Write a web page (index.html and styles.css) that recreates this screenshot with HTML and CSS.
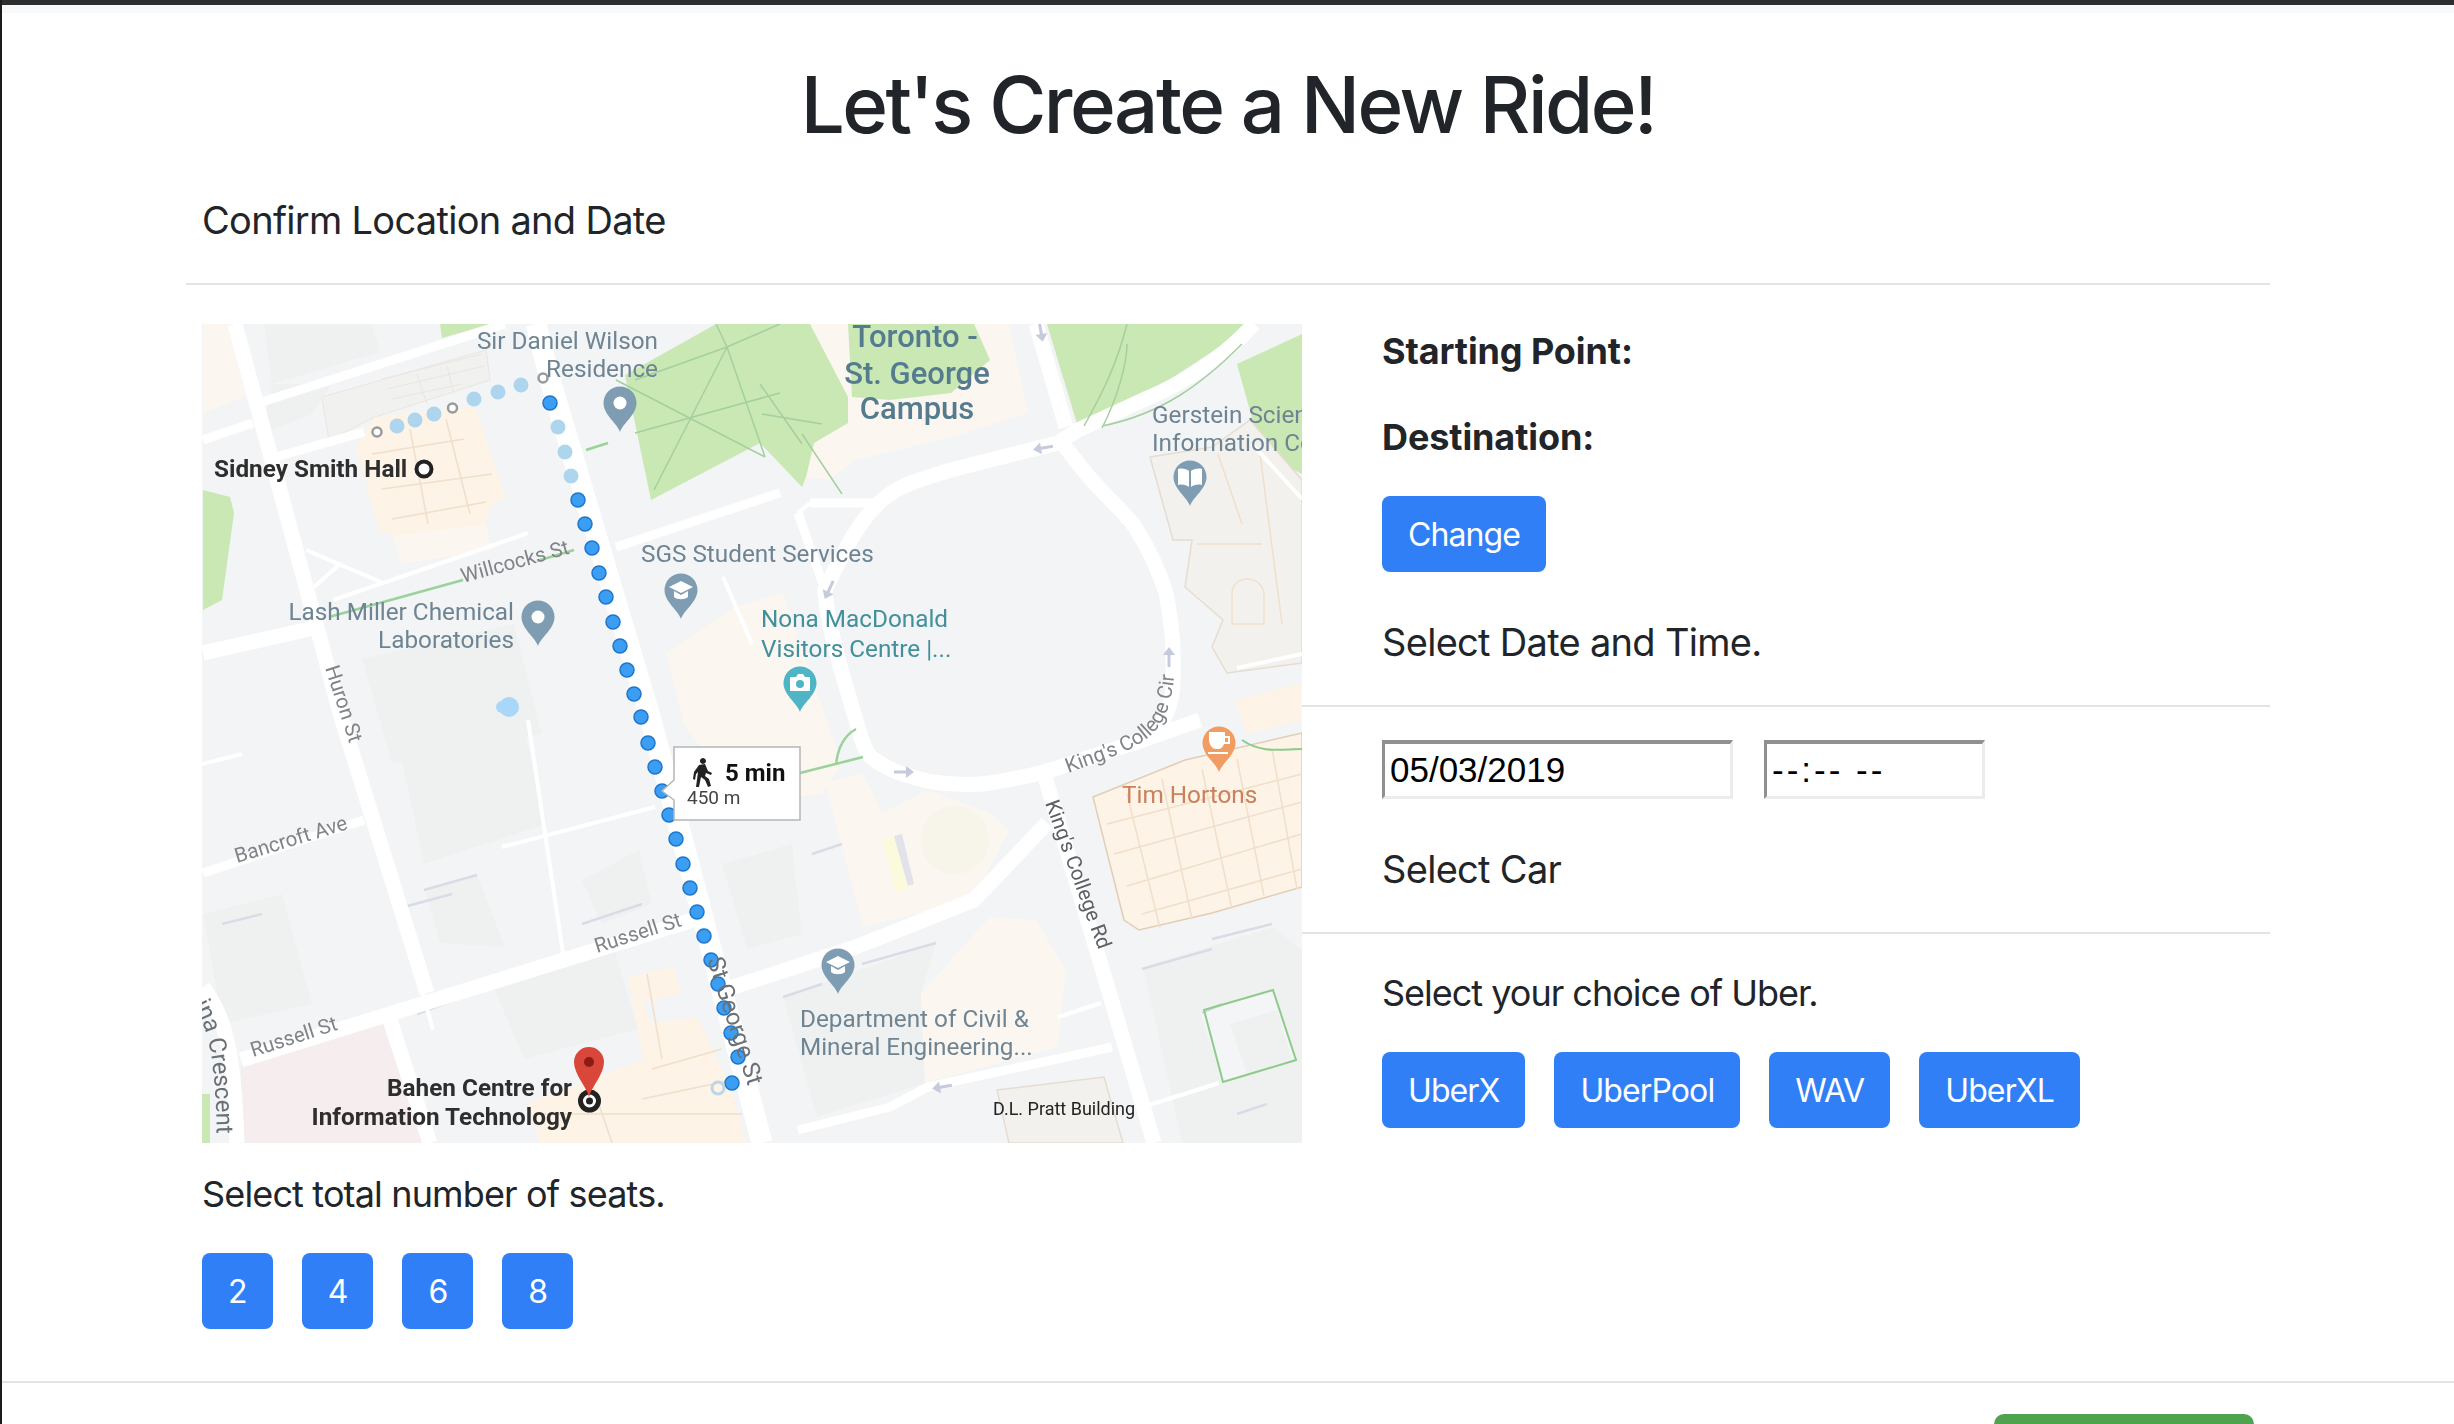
FILE: index.html
```html
<!DOCTYPE html>
<html lang="en">
<head>
    <meta charset="UTF-8">
    <meta name="viewport" content="width=device-width, initial-scale=1.0">
    <title>New Ride</title>
    <link rel="stylesheet" href="styles.css">
</head>
<body>
    <div class="top-bar"></div>
    <div class="top-band"></div>

    <main class="page">
        <h1 class="title">Let's Create a New Ride!</h1>

        <div class="wrap">
            <h2 class="subtitle">Confirm Location and Date</h2>
            <hr class="rule">

            <div class="columns">
                <!-- left side, map and seats -->
                <section class="col-left">
                    <svg class="map" viewBox="0 0 1100 819" width="1100" height="819" role="img" aria-label="Walking route map">
                        <defs>
                            <path id="pin" d="M0 29C-3 20-16.5 12-16.5 0A16.5 16.5 0 1 1 16.5 0C16.5 12 3 20 0 29Z"/>
                            <path id="arrow" d="M-10-1.5H2V-6L10 0 2 6V1.5H-10Z"/>
                            <path id="cap" d="M0-9-12-3 0 3 12-3ZM-7 1V7C-4 10 4 10 7 7V1L0 5Z"/>
                            <path id="kings-cir" d="M866 449C900 436 930 428 948 412C966 396 972 372 973 335"/>
                            <path id="crescent" d="M-8 680C2 700 8 716 11 745C14 770 15 800 15 840"/>
                        </defs>

                        <!-- green -->
                        <polygon class="green" points="423,51 514,0 803,0 788,36 646,119 604,153 600,163 558,119 449,176"/>
                        <polygon class="green" points="845,0 1052,0 941,73 876,103"/>
                        <polygon class="green" points="238,0 288,0 240,14"/>
                        <polygon class="green" points="1,166 28,173 32,189 20,276 1,286"/>
                        <polygon class="green" points="1035,40 1100,10 1100,150 1060,130"/>
                        <polygon class="green" points="0,770 8,770 8,819 0,819"/>
                        <polygon class="pink" points="39,739 181,699 223,819 39,819"/>

                        <!-- buildings -->
                        <polygon class="cream-pale" points="1,0 26,0 47,70 1,90"/>
                        <polygon class="grey" points="62,0 170,0 178,28 70,60"/>
                        <polygon class="outline-soft" points="120,73 284,26 288,56 173,93 127,116"/>
                        <path class="inner-soft" d="M180 55 280 30M185 65 282 42M190 75 260 60M215 50 225 80M245 42 252 70"/>
                        <polygon class="cream" points="173,93 273,83 303,173 288,183 284,203 196,213 177,206 154,123"/>
                        <path class="inner" d="M170 130 262 115M180 165 290 150M190 195 284 178M208 105 226 200M244 95 268 190"/>
                        <polygon class="cream-pale" points="190,212 284,200 290,226 200,240"/>
                        <polygon class="cream-pale" points="608,0 646,73 646,99 612,119 604,153 627,156 654,136 749,113 826,89 807,0"/>
                        <polygon class="green" points="646,0 772,0 788,36 749,69 688,76 650,73"/>
                        <polygon class="outline" points="948,133 1010,123 1048,96 1100,156 1100,339 1025,349 1010,323 1021,296 983,263 990,216 971,216"/>
                        <path class="inner" d="M1016 130 1040 200M1058 130 1080 300M995 220H1060M1030 270C1030 250 1060 250 1062 270V300H1030Z"/>
                        <polygon class="cream-pale" points="464,329 533,283 581,269 640,440 620,470 540,480 482,400"/>
                        <polygon class="cream-pale" points="623,459 661,449 680,489 726,466 788,489 807,506 772,576 661,603"/>
                        <circle class="rotunda" cx="753" cy="516" r="34"/>
                        <polygon class="yellow" points="680,515 692,512 707,565 694,568"/>
                        <polygon class="violet" points="692,512 700,510 712,560 706,562"/>
                        <polygon class="cream-edge" points="891,473 983,436 1100,409 1100,563 1010,589 937,606 922,596"/>
                        <path class="inner" d="M905 500 1100 450M912 530 1100 478M925 562 1100 510M940 590 1100 545M925 470 958 604M960 455 990 595M1000 445 1030 585M1035 435 1062 572M1070 425 1095 565"/>
                        <polygon class="cream" points="1032,376 1100,359 1100,396 1045,410"/>
                        <polygon class="grey" points="581,673 734,619 719,669 723,759 615,793"/>
                        <polygon class="cream-pale" points="719,669 788,593 834,596 864,646 856,723 723,759"/>
                        <polygon class="outline" points="795,766 902,753 921,819 807,819"/>
                        <polygon class="grey" points="941,643 1071,603 1100,626 1100,819 980,819"/>
                        <polygon class="grey-light" points="998,688 1071,666 1094,736 1021,758"/>
                        <polygon class="grey" points="1028,700 1075,686 1090,735 1045,750"/>
                        <polygon class="grey" points="196,419 320,396 345,500 222,540"/>
                        <polygon class="grey" points="223,566 275,551 303,623 238,619"/>
                        <polygon class="grey" points="1,590 80,570 110,680 20,700"/>
                        <polygon class="grey" points="380,556 437,526 450,580 400,600"/>
                        <polygon class="grey" points="130,60 110,90 60,110 70,60"/>
                        <polygon class="grey" points="160,335 312,300 340,410 190,440"/>
                        <polygon class="grey" points="290,660 411,621 436,705 322,735"/>
                        <polygon class="grey" points="520,540 590,520 600,610 545,625"/>
                        <polygon class="cream" points="426,653 472,643 479,669 441,679 449,699 495,693 529,763 544,819 338,819 326,779 441,736"/>
                        <path class="inner" d="M445 650 460 735M390 760 410 819M450 745 520 725M440 775 535 755M340 790H540"/>
                        <path class="edge" d="M222 566 275 551M198 584 250 570M380 600 440 580M20 600 60 590M610 530 640 520M940 645 1010 625M1010 615 1070 600M581 673 620 660M660 640 734 619M215 690 275 668M1000 689 1020 680M1035 790 1065 780"/>

                        <!-- roads -->
                        <path class="road-xl" d="M334 0 349 59 449 396 560 819"/>
                        <path class="road-lg" d="M33 0 140 396 225 669M188 696 228 819M1 329 112 304M39 736 491 596M510 670 654 623 772 576 845 499M834 0 864 103M843 453 952 819M1 663C20 690 32 716 35 819"/>
                        <path class="road-lg" d="M1052 0C1020 35 980 60 941 76L876 106 856 119 749 146C720 155 700 160 684 173C660 190 640 230 623 266C625 300 640 350 654 396C660 420 665 432 673 436C690 448 705 452 730 458C750 460 770 462 788 459C810 455 830 452 849 446L941 416 998 396"/>
                        <path class="road-lg" d="M860 119 879 143C900 170 920 185 933 203C950 230 958 250 964 269C970 300 972 320 971 343C972 370 968 385 960 398L942 416"/>
                        <path class="road-md" d="M1 116 51 99M60 78 303 0M1 549 162 496M74 133 162 108M414 223 578 169M596 189 623 266M608 179H673M688 783 726 763 910 723M596 806 688 783"/>
                        <path class="road-sm" d="M104 226 181 259M112 263 139 239M131 276 257 233 326 209M300 523 453 483M941 783 1017 759M856 693 899 679M521 253 550 320M596 189 608 179M1050 120 1100 175M326 396 361 629M177 511 231 706M1035 344 1100 330M0 440 40 430"/>

                        <!-- lines on the park -->
                        <path class="park-line" d="M525 23 452 166M525 23 563 133M433 109 578 69M414 56 563 133M433 56 525 23 578 0M525 23 514 0M558 60 600 120M560 90 620 100M640 170 600 110"/>
                        <path class="park-line" d="M882 102C900 70 915 40 925 0M900 104C915 75 925 40 925 20M900 102C960 90 1000 60 1040 20"/>
                        <path class="trail" d="M384 126 406 119M127 293 261 256M335 237 372 226M598 449 661 433M634 441C636 420 645 410 654 405"/>
                        <path class="trail-thin" d="M1002 686 1071 666 1094 736 1021 758ZM1040 416C1060 430 1080 425 1100 425"/>
                        <circle class="water" cx="307" cy="383" r="10"/>
                        <circle class="water" cx="300" cy="383" r="6"/>

                        <use class="arrow" href="#arrow" transform="translate(841,124) rotate(170)"/>
                        <use class="arrow" href="#arrow" transform="translate(627,266) rotate(115)"/>
                        <use class="arrow" href="#arrow" transform="translate(967,333) rotate(-90)"/>
                        <use class="arrow" href="#arrow" transform="translate(839,8) rotate(80)"/>
                        <use class="arrow" href="#arrow" transform="translate(702,448)"/>
                        <use class="arrow" href="#arrow" transform="translate(740,763) rotate(170)"/>

                        <!-- route dots -->
                        <g class="dot-ring">
                            <circle cx="175" cy="108" r="4.5"/>
                            <circle cx="250.5" cy="84" r="4.5"/>
                            <circle cx="341" cy="54" r="4.5"/>
                        </g>
                        <g class="dot-pale">
                            <circle cx="195" cy="102" r="7.5"/>
                            <circle cx="213" cy="96" r="7.5"/>
                            <circle cx="232" cy="90" r="7.5"/>
                            <circle cx="272" cy="75" r="7.5"/>
                            <circle cx="296" cy="68" r="7.5"/>
                            <circle cx="319" cy="61" r="7.5"/>
                            <circle cx="356" cy="103" r="7.5"/>
                            <circle cx="363" cy="128" r="7.5"/>
                            <circle cx="369" cy="152" r="7.5"/>
                        </g>
                        <g class="dot">
                            <circle cx="348" cy="79" r="7"/>
                            <circle cx="376" cy="176" r="7"/>
                            <circle cx="383" cy="200" r="7"/>
                            <circle cx="390" cy="224" r="7"/>
                            <circle cx="397" cy="249" r="7"/>
                            <circle cx="404" cy="273" r="7"/>
                            <circle cx="411" cy="298" r="7"/>
                            <circle cx="418" cy="322" r="7"/>
                            <circle cx="425" cy="346" r="7"/>
                            <circle cx="432" cy="370" r="7"/>
                            <circle cx="439" cy="393" r="7"/>
                            <circle cx="446" cy="419" r="7"/>
                            <circle cx="453" cy="443" r="7"/>
                            <circle cx="460" cy="467" r="7"/>
                            <circle cx="467" cy="491" r="7"/>
                            <circle cx="474" cy="515" r="7"/>
                            <circle cx="481" cy="540" r="7"/>
                            <circle cx="488" cy="564" r="7"/>
                            <circle cx="495" cy="588" r="7"/>
                            <circle cx="502" cy="612" r="7"/>
                            <circle cx="509" cy="636" r="7"/>
                            <circle cx="516" cy="660" r="7"/>
                            <circle cx="522" cy="684" r="7"/>
                            <circle cx="529" cy="709" r="7"/>
                            <circle cx="536" cy="733" r="7"/>
                            <circle cx="530" cy="759" r="7"/>
                        </g>
                        <circle class="end-ring" cx="516" cy="764" r="6"/>

                        <!-- pins -->
                        <use class="pin-blue" href="#pin" transform="translate(418,79)"/>
                        <circle class="pin-hole" cx="418" cy="79" r="6.5"/>
                        <use class="pin-blue" href="#pin" transform="translate(336,293)"/>
                        <circle class="pin-hole" cx="336" cy="293" r="6.5"/>
                        <use class="pin-blue" href="#pin" transform="translate(479,266)"/>
                        <use class="pin-hole" href="#cap" transform="translate(479,266)"/>
                        <use class="pin-blue" href="#pin" transform="translate(636,641)"/>
                        <use class="pin-hole" href="#cap" transform="translate(636,641)"/>
                        <use class="pin-blue" href="#pin" transform="translate(988,153)"/>
                        <path class="pin-hole" d="M976 145C980 144 985 145 987 147V163C985 161 980 160 976 161ZM1000 145C996 144 991 145 989 147V163C991 161 996 160 1000 161Z"/>
                        <use class="pin-teal" href="#pin" transform="translate(598,359)"/>
                        <path class="pin-hole" d="M588 353H594L596 350H601L603 353H608V367H588Z"/>
                        <circle class="pin-teal" cx="598" cy="360" r="4"/>
                        <use class="pin-orange" href="#pin" transform="translate(1017,419)"/>
                        <path class="pin-hole" d="M1007 408H1023V412H1028V420H1022C1021 423 1019 425 1016 425H1014C1010 425 1007 420 1007 416ZM1023 414V418H1026V414ZM1006 428H1026V430H1006Z"/>

                        <!-- map labels -->
                        <text class="lbl lbl-end" x="456" y="25">Sir Daniel Wilson</text>
                        <text class="lbl lbl-end" x="456" y="53">Residence</text>
                        <text class="lbl" x="439" y="238">SGS Student Services</text>
                        <text class="lbl lbl-end" x="312" y="296">Lash Miller Chemical</text>
                        <text class="lbl lbl-end" x="312" y="324">Laboratories</text>
                        <text class="lbl" x="950" y="99">Gerstein Science</text>
                        <text class="lbl" x="950" y="127">Information Commons</text>
                        <text class="lbl" x="598" y="703">Department of Civil &amp;</text>
                        <text class="lbl" x="598" y="731">Mineral Engineering...</text>
                        <text class="lbl-campus" x="713" y="23">Toronto -</text>
                        <text class="lbl-campus" x="715" y="60">St. George</text>
                        <text class="lbl-campus" x="715" y="95">Campus</text>
                        <text class="lbl-teal" x="559" y="303">Nona MacDonald</text>
                        <text class="lbl-teal" x="559" y="333">Visitors Centre |...</text>
                        <text class="lbl-orange" x="920" y="479">Tim Hortons</text>
                        <text class="lbl-strong" x="12" y="153">Sidney Smith Hall</text>
                        <text class="lbl-strong lbl-end" x="370" y="772">Bahen Centre for</text>
                        <text class="lbl-strong lbl-end" x="370" y="801">Information Technology</text>
                        <text class="lbl-small" x="791" y="791">D.L. Pratt Building</text>
                        <text class="street" transform="translate(261,259) rotate(-15.4)">Willcocks St</text>
                        <text class="street" transform="translate(123,344) rotate(72)">Huron St</text>
                        <text class="street" transform="translate(35,539) rotate(-17)">Bancroft Ave</text>
                        <text class="street" transform="translate(395,629) rotate(-17.6)">Russell St</text>
                        <text class="street" transform="translate(51,733) rotate(-17.8)">Russell St</text>
                        <text class="street street-dark" transform="translate(843,479) rotate(70)">King's College Rd</text>
                        <text class="street street-big" transform="translate(505,636) rotate(72)">St George St</text>
                        <text class="street"><textPath href="#kings-cir">King's College Cir</textPath></text>
                        <text class="street street-big"><textPath href="#crescent">ina Crescent</textPath></text>

                        <!-- start and end markers -->
                        <circle class="start-ring" cx="222" cy="145" r="7.5"/>
                        <circle class="target" cx="387.5" cy="777" r="9"/>
                        <circle class="target-dot" cx="387.5" cy="777" r="3.5"/>
                        <path class="pin-red" d="M387 773C384 762 372 750 372 738A15 15 0 1 1 402 738C402 750 390 762 387 773Z"/>
                        <circle class="pin-red-dot" cx="387" cy="738" r="5"/>

                        <!-- walking time box -->
                        <path class="callout" d="M472 423H598V496H472V476L460 467 472 456Z"/>
                        <path class="walker" d="M501 434a3 3 0 1 1-.1 0ZM497 441 503 440 506 447 510 449 509 451 504 449 503 452 507 455 509 462 506 463 503 456 499 453 497 463 494 463 496 448 494 450 493 456 491 455 492 448Z"/>
                        <text class="time" x="523" y="457">5 min</text>
                        <text class="dist" x="485" y="480">450 m</text>
                    </svg>

                    <p class="seats-label">Select total number of seats.</p>
                    <div class="btn-row">
                        <button class="btn">2</button>
                        <button class="btn">4</button>
                        <button class="btn">6</button>
                        <button class="btn">8</button>
                    </div>
                </section>

                <!-- right side, the form -->
                <section class="col-right">
                    <p class="pad strong">Starting Point:</p>
                    <p class="pad strong">Destination:</p>
                    <div class="pad"><button class="btn">Change</button></div>
                    <p class="pad form-label">Select Date and Time.</p>
                    <hr class="rule rule-label">
                    <div class="pad date-row">
                        <input class="date-input" type="text" value="05/03/2019">
                        <input class="time-input" type="text" value="--:-- --">
                    </div>
                    <p class="pad form-label car-label">Select Car</p>
                    <hr class="rule rule-label">
                    <p class="pad choice-label">Select your choice of Uber.</p>
                    <div class="pad btn-row">
                        <button class="btn">UberX</button>
                        <button class="btn">UberPool</button>
                        <button class="btn">WAV</button>
                        <button class="btn">UberXL</button>
                    </div>
                </section>
            </div>
        </div>

        <footer class="foot">
            <button class="btn-green" aria-label="Next"></button>
        </footer>
    </main>
</body>
</html>
```

FILE: styles.css
```css
html, body {
    height: 100%;
    overflow: hidden;
}
body {
    box-sizing: border-box;
    margin: 0;
    border-left: 2px solid #1b1b1b;
    font-family: Inter, "Liberation Sans", sans-serif;
    font-size: 36px;
    line-height: 54px;
    color: #212529;
    background: #fff;
}
.top-bar {
    height: 5px;
    background: #2d2d2d;
}
.top-band {
    height: 8px;
    background: #f8f9fa;
}
.page {
    display: flow-root;
    height: 1411px;
}
.title {
    margin: 44px 0 40px;
    font-size: 78px;
    line-height: 96px;
    font-weight: 500;
    letter-spacing: -2.5px;
    text-align: center;
}
.wrap {
    width: 2084px;
    margin-left: 184px;
}
.subtitle {
    margin: 0 16px 36px;
    font-size: 38px;
    line-height: 54px;
    font-weight: 400;
    letter-spacing: -0.7px;
}
.rule {
    margin: 0;
    border: 0;
    border-top: 2px solid #e4e4e4;
}
.columns {
    display: flex;
    margin-top: 39px;
    height: 1057px;
}
.col-left {
    width: 1100px;
    margin-left: 16px;
}
.col-right {
    flex: 1;
}
p {
    margin: 0;
}
.map {
    display: block;
    background: #f2f4f6;
    filter: blur(0.4px);
}
.seats-label {
    margin: 24px 0 32px;
    letter-spacing: -0.85px;
}
.btn-row {
    display: flex;
    gap: 29px;
}
.btn {
    padding: 12px 26px 10px;
    border: 0;
    border-radius: 8px;
    font: inherit;
    font-size: 32px;
    letter-spacing: -0.9px;
    color: #fff;
    background: #317ff7;
}
.pad {
    padding-left: 80px;
}
.strong {
    font-weight: 700;
    letter-spacing: -0.1px;
    margin-bottom: 32px;
}
.form-label {
    margin-top: 43px;
    margin-bottom: 36px;
    font-size: 38px;
    letter-spacing: -0.7px;
}
.car-label {
    margin-top: 43px;
    margin-bottom: 36px;
}
.date-row {
    display: flex;
    gap: 31px;
    margin-top: 33px;
}
.date-input, .time-input {
    box-sizing: border-box;
    height: 59px;
    padding: 0 5px;
    border-style: solid;
    border-width: 4px 3px 3px 3px;
    border-color: #909090 #ececec #ececec #909090;
    font-family: "Liberation Sans", sans-serif;
    font-size: 35px;
    color: #000;
}
.date-input {
    width: 351px;
}
.time-input {
    width: 221px;
    letter-spacing: 3px;
}
.choice-label {
    margin-top: 32px;
    margin-bottom: 32px;
    letter-spacing: -1px;
}
.foot {
    display: flex;
    justify-content: flex-end;
    padding: 31px 200px 0 0;
    border-top: 2px solid #e4e4e4;
}
.btn-green {
    display: block;
    width: 260px;
    height: 10px;
    padding: 0;
    border: 0;
    border-radius: 10px 10px 0 0;
    background: #4fa34f;
}

/* map shapes */
.green { fill: #c9e8b4; }
.pink { fill: #f6eeee; }
.cream { fill: #fdf3e7; }
.cream-edge { fill: #fdf3e7; stroke: #e2cdb6; stroke-width: 1.5; }
.cream-pale { fill: #fbf6f0; }
.grey { fill: #eff1f1; }
.grey-light { fill: #f4f5f7; }
.outline { fill: #f3f1ed; stroke: #e6dcd0; stroke-width: 1.5; }
.outline-soft { fill: #f1f1ef; stroke: #ebe6df; stroke-width: 1; }
.inner { fill: none; stroke: #f0dfca; stroke-width: 1.5; }
.inner-soft { fill: none; stroke: #ebe6df; stroke-width: 1; }
.edge { fill: none; stroke: #d9dce6; stroke-width: 2.5; }
.rotunda { fill: #f7f4ea; }
.yellow { fill: #fbfadd; }
.violet { fill: #e2e2ea; }
.road-xl, .road-lg, .road-md, .road-sm {
    fill: none;
    stroke: #fff;
    stroke-linejoin: round;
}
.road-xl { stroke-width: 21px; }
.road-lg { stroke-width: 15px; }
.road-md { stroke-width: 9px; }
.road-sm { stroke-width: 4px; }
.park-line { fill: none; stroke: #a5cf9f; stroke-width: 1.5; }
.trail { fill: none; stroke: #9bd29a; stroke-width: 2.5; }
.trail-thin { fill: none; stroke: #8ecb8a; stroke-width: 2; }
.water { fill: #a9d7fa; }
.arrow { fill: #c5cadd; }

.dot circle { fill: #3b9ef2; stroke: #1c76cc; stroke-width: 1.5; }
.dot-pale circle { fill: #add6ee; }
.dot-ring circle { fill: #fff; stroke: #9a9a9a; stroke-width: 2.5; }
.end-ring { fill: none; stroke: #bcd5ea; stroke-width: 3; }

.pin-blue { fill: #7f9db2; }
.pin-teal { fill: #4fb5c6; }
.pin-orange { fill: #f09c62; }
.pin-hole { fill: #fff; }
.pin-red { fill: #d9463a; }
.pin-red-dot { fill: #8c1b12; }
.start-ring { fill: #fff; stroke: #222; stroke-width: 4; }
.target { fill: #fff; stroke: #222; stroke-width: 5; }
.target-dot { fill: #222; }

.callout { fill: #fff; stroke: #b5b5b5; stroke-width: 1.5; }
.walker { fill: #222; }

/* map text */
.lbl, .lbl-teal, .lbl-orange, .lbl-strong, .lbl-small, .lbl-campus, .street, .time, .dist {
    font-family: Roboto, sans-serif;
}
.lbl { font-size: 24.3px; fill: #6e8493; }
.lbl-end { text-anchor: end; }
.lbl-teal { font-size: 24.3px; fill: #41909b; }
.lbl-orange { font-size: 24.3px; fill: #c9805c; }
.lbl-strong { font-size: 24.3px; font-weight: 700; fill: #2e2e2e; }
.lbl-small { font-size: 18px; fill: #222; }
.lbl-campus { font-size: 31px; font-weight: 500; fill: #557b8f; text-anchor: middle; }
.street { font-size: 20.5px; fill: #808488; }
.street-dark { fill: #5d6165; }
.street-big { font-size: 24px; fill: #6b7075; }
.time { font-size: 24px; font-weight: 700; fill: #111; }
.dist { font-size: 19px; fill: #444; }
```
